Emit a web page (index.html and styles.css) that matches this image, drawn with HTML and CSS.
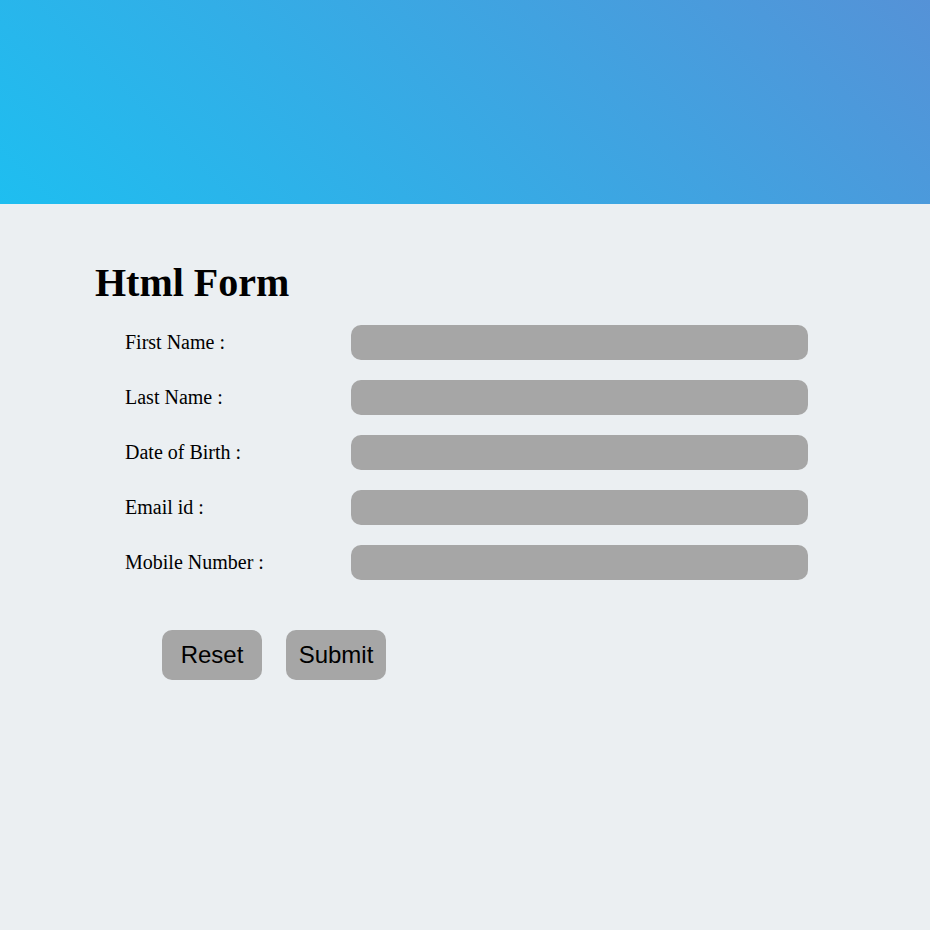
FILE: index.html
```html
<!DOCTYPE html>
<html>
<head>
<meta charset="utf-8">
<title>Html Form</title>
<link rel="stylesheet" href="styles.css">
</head>
<body>
<header class="hero"></header>
<main class="main">
  <h1 class="title">Html Form</h1>
  <form class="form">
    <div class="fields">
      <label class="label" for="fn">First Name :</label>
      <input class="input" id="fn" type="text">
      <label class="label" for="ln">Last Name :</label>
      <input class="input" id="ln" type="text">
      <label class="label" for="dob">Date of Birth :</label>
      <input class="input" id="dob" type="text">
      <label class="label" for="em">Email id :</label>
      <input class="input" id="em" type="text">
      <label class="label" for="mn">Mobile Number :</label>
      <input class="input" id="mn" type="text">
    </div>
    <div class="actions">
      <button class="btn" type="reset">Reset</button>
      <button class="btn" type="button">Submit</button>
    </div>
  </form>
</main>
</body>
</html>
```
FILE: styles.css
```css
html, body {
  margin: 0;
  padding: 0;
}
body {
  background: #ebeff2;
  font-family: "Liberation Serif", "Times New Roman", serif;
  color: #000;
  min-height: 930px;
}
.hero {
  height: 204px;
  background: linear-gradient(45deg, #1ebef0, #5592d7);
}
.main {
  padding: 56px 0 0 95px;
}
.title {
  margin: 0;
  font-size: 40px;
  line-height: 46px;
  font-weight: bold;
}
.form {
  margin-top: 19px;
}
.fields {
  display: grid;
  grid-template-columns: 226px 457px;
  grid-auto-rows: 35px;
  row-gap: 20px;
  padding-left: 30px;
  align-items: center;
}
.label {
  font-size: 20px;
  line-height: 23px;
}
.input {
  box-sizing: border-box;
  height: 35px;
  width: 457px;
  border: none;
  border-radius: 10px;
  background: #a6a6a6;
  margin: 0;
  padding: 0 10px;
  outline: none;
}
.actions {
  display: flex;
  gap: 24px;
  margin-top: 50px;
  padding-left: 67px;
}
.btn {
  width: 100px;
  height: 50px;
  border: none;
  border-radius: 10px;
  background: #a6a6a6;
  font-family: "Liberation Sans", Arial, sans-serif;
  font-size: 24px;
  color: #000;
  padding: 0;
  cursor: pointer;
}
```
